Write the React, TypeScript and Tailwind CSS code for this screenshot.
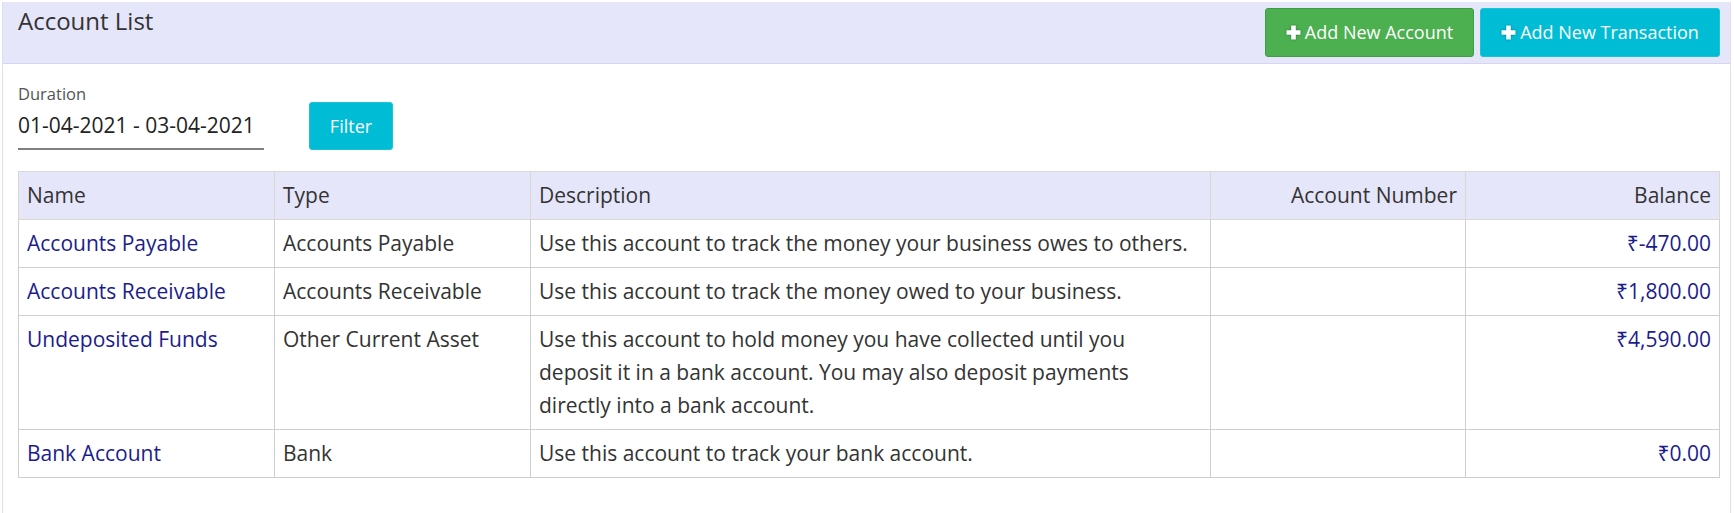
import React from 'react';

interface Account {
  name: string;
  type: string;
  description: string;
  number: string;
  balance: string;
  narrow?: boolean;
}

const accounts: Account[] = [
  {
    name: 'Accounts Payable',
    type: 'Accounts Payable',
    description: 'Use this account to track the money your business owes to others.',
    number: '',
    balance: '₹-470.00',
  },
  {
    name: 'Accounts Receivable',
    type: 'Accounts Receivable',
    description: 'Use this account to track the money owed to your business.',
    number: '',
    balance: '₹1,800.00',
  },
  {
    name: 'Undeposited Funds',
    type: 'Other Current Asset',
    description:
      'Use this account to hold money you have collected until you deposit it in a bank account. You may also deposit payments directly into a bank account.',
    number: '',
    balance: '₹4,590.00',
    narrow: true,
  },
  {
    name: 'Bank Account',
    type: 'Bank',
    description: 'Use this account to track your bank account.',
    number: '',
    balance: '₹0.00',
  },
];

const PlusIcon = () => (
  <svg width="15" height="15" viewBox="0 0 15 15" className="shrink-0 drop-shadow-[0_0_1px_rgba(0,0,0,0.35)]">
    <path d="M5.2 0.5h4.6v4.7h4.7v4.6H9.8v4.7H5.2V9.8H0.5V5.2h4.7z" fill="#fff" />
  </svg>
);

const App = () => {
  return (
    <div className="min-h-screen bg-white pt-[2px] font-['Open_Sans','Noto_Sans',sans-serif] text-[#333]">
      <div className="ml-[2px] mr-[3px] min-h-[511px] border-x border-[#e0e0ea]">
        {/* header */}
        <div className="flex h-[62px] items-start justify-between border-b border-[#d6d6f4] bg-[#e6e6fa] pl-[15px] pr-[10px]">
          <h1 className="pt-[2px] text-[24px] leading-[34px] font-normal text-[#333]">Account List</h1>
          <div className="mt-[6px] flex gap-[6px]">
            <button className="flex h-[49px] w-[209px] items-center justify-center gap-[4px] rounded-[3px] border border-[#3e9e42] bg-[#4caf50] text-[18px] text-white">
              <PlusIcon />
              Add New Account
            </button>
            <button className="flex h-[49px] w-[240px] items-center justify-center gap-[4px] rounded-[3px] border border-[#19c3d9] bg-[#00bcd4] text-[18px] text-white">
              <PlusIcon />
              Add New Transaction
            </button>
          </div>
        </div>

        {/* body */}
        <div className="pl-[15px] pr-[11px] pt-[18px]">
          <div className="flex items-end gap-[45px]">
            <div className="w-[246px]">
              <div className="text-[16.5px] leading-[24px] text-[#555]">Duration</div>
              <div className="mt-[4px] h-[40px] border-b-2 border-[#808080] text-[21px] leading-[30px] text-[#222]">
                01-04-2021 - 03-04-2021
              </div>
            </div>
            <button className="h-[48px] w-[84px] rounded-[3px] border border-[#1cc4da] bg-[#00bcd4] text-[18px] text-white">
              Filter
            </button>
          </div>

          <table className="mt-[21px] w-[1701px] table-fixed border-collapse text-[21px] leading-[33px]">
            <colgroup>
              <col className="w-[256px]" />
              <col className="w-[256px]" />
              <col className="w-[680px]" />
              <col className="w-[255px]" />
              <col className="w-[254px]" />
            </colgroup>
            <thead>
              <tr className="bg-[#e6e6fa]">
                <th className="border border-[#d8d8d0] px-[8px] py-[7px] text-left font-normal">Name</th>
                <th className="border border-[#d8d8d0] px-[8px] py-[7px] text-left font-normal">Type</th>
                <th className="border border-[#d8d8d0] px-[8px] py-[7px] text-left font-normal">Description</th>
                <th className="border border-[#d8d8d0] px-[8px] py-[7px] text-right font-normal">Account Number</th>
                <th className="border border-[#d8d8d0] px-[8px] py-[7px] text-right font-normal">Balance</th>
              </tr>
            </thead>
            <tbody>
              {accounts.map((acc) => (
                <tr key={acc.name}>
                  <td className="border border-[#cfcfcf] px-[8px] py-[7px] align-top">
                    <a href="#" className="text-[#1c1c8e]">{acc.name}</a>
                  </td>
                  <td className="border border-[#cfcfcf] px-[8px] py-[7px] align-top">{acc.type}</td>
                  <td className="border border-[#cfcfcf] px-[8px] py-[7px] align-top">
                    <div className={acc.narrow ? 'max-w-[615px]' : ''}>{acc.description}</div>
                  </td>
                  <td className="border border-[#cfcfcf] px-[8px] py-[7px] text-right align-top">{acc.number}</td>
                  <td className="border border-[#cfcfcf] px-[8px] py-[7px] text-right align-top text-[#1c1c8e]">
                    {acc.balance}
                  </td>
                </tr>
              ))}
            </tbody>
          </table>
        </div>
      </div>
    </div>
  );
};

export default App;
